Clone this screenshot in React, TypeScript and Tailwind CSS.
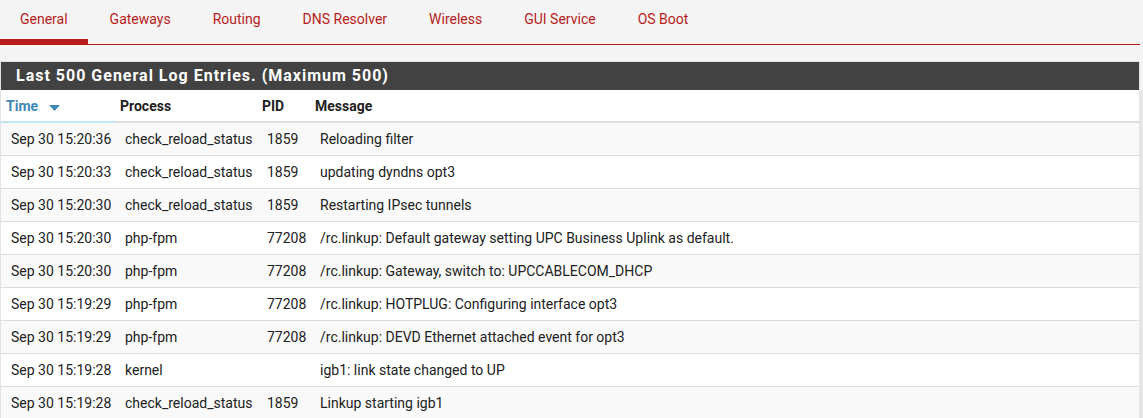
import React from "react";

const tabs = ["General", "Gateways", "Routing", "DNS Resolver", "Wireless", "GUI Service", "OS Boot"];

const rows: [string, string, string, string][] = [
  ["Sep 30 15:20:36", "check_reload_status", "1859", "Reloading filter"],
  ["Sep 30 15:20:33", "check_reload_status", "1859", "updating dyndns opt3"],
  ["Sep 30 15:20:30", "check_reload_status", "1859", "Restarting IPsec tunnels"],
  ["Sep 30 15:20:30", "php-fpm", "77208", "/rc.linkup: Default gateway setting UPC Business Uplink as default."],
  ["Sep 30 15:20:30", "php-fpm", "77208", "/rc.linkup: Gateway, switch to: UPCCABLECOM_DHCP"],
  ["Sep 30 15:19:29", "php-fpm", "77208", "/rc.linkup: HOTPLUG: Configuring interface opt3"],
  ["Sep 30 15:19:29", "php-fpm", "77208", "/rc.linkup: DEVD Ethernet attached event for opt3"],
  ["Sep 30 15:19:28", "kernel", "", "igb1: link state changed to UP"],
  ["Sep 30 15:19:28", "check_reload_status", "1859", "Linkup starting igb1"],
];

export default function App() {
  return (
    <div
      className="w-[1143px] h-[418px] overflow-hidden bg-[#f4f4f4] text-[14px] text-[#212121]"
      style={{ fontFamily: "Roboto, 'Liberation Sans', sans-serif" }}
    >
      {/* Tabs */}
      <div className="flex h-[45px] w-[1140px] border-b border-[#b71c1c]">
        {tabs.map((t, i) => (
          <div
            key={t}
            className={
              "flex h-full items-start pt-[10px] px-[20px] mr-[2px] text-[#b71c1c] " +
              (i === 0 ? "border-b-[5px] border-[#b71c1c] mb-[-1px] h-[45px]" : "")
            }
          >
            <span className="leading-[18px]">{t}</span>
          </div>
        ))}
      </div>

      {/* Panel */}
      <div className="mt-[16px] w-[1143px]">
        <div className="w-[1140px] h-[29px] bg-[#424242] border border-[#e2e2e2] border-b-0 flex items-center pl-[15px]">
          <span className="text-white font-bold text-[16px] tracking-[1px] leading-none">
            Last 500 General Log Entries. (Maximum 500)
          </span>
        </div>
        <div className="flex">
          <div className="w-[1139px] border-l border-[#e2e2e2] bg-white">
            {/* header */}
            <div className="grid grid-cols-[114px_142px_53px_1fr] h-[33px] font-bold">
              <div className="flex items-center pl-[5px] pt-[1px] text-[#3d87b5] border-b-2 border-[#bfe6f3]">
                <span>Time</span>
                <svg width="11" height="6" viewBox="0 0 11 6" className="ml-[11px] mt-[3px]">
                  <path d="M0 0 L11 0 L5.5 6 Z" fill="#3d87b5" />
                </svg>
              </div>
              <div className="flex items-center pl-[5px] pt-[1px] border-b-2 border-[#dddddd]">Process</div>
              <div className="flex items-center pl-[5px] pt-[1px] border-b-2 border-[#dddddd]">PID</div>
              <div className="flex items-center pl-[5px] pt-[1px] border-b-2 border-[#dddddd]">Message</div>
            </div>
            {rows.map((r, i) => (
              <div
                key={i}
                className={
                  "grid grid-cols-[114px_142px_53px_1fr] h-[33px] border-b border-[#dddddd] " +
                  (i % 2 === 0 ? "bg-[#f9f9f9]" : "bg-white")
                }
              >
                <div className="flex items-center pl-[10px] whitespace-nowrap">{r[0]}</div>
                <div className="flex items-center pl-[10px] whitespace-nowrap">{r[1]}</div>
                <div className="flex items-center pl-[10px] whitespace-nowrap">{r[2]}</div>
                <div className="flex items-center pl-[10px] whitespace-nowrap">{r[3]}</div>
              </div>
            ))}
          </div>
          <div className="w-[4px] bg-[#e6e6e6]" />
        </div>
      </div>
    </div>
  );
}
